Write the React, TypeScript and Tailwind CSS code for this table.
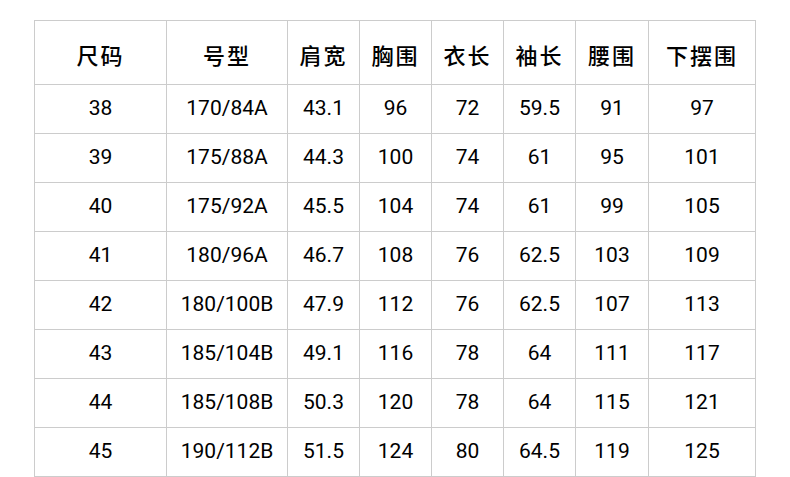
const headers = ["尺码", "号型", "肩宽", "胸围", "衣长", "袖长", "腰围", "下摆围"];

const rows: string[][] = [
  ["38", "170/84A", "43.1", "96", "72", "59.5", "91", "97"],
  ["39", "175/88A", "44.3", "100", "74", "61", "95", "101"],
  ["40", "175/92A", "45.5", "104", "74", "61", "99", "105"],
  ["41", "180/96A", "46.7", "108", "76", "62.5", "103", "109"],
  ["42", "180/100B", "47.9", "112", "76", "62.5", "107", "113"],
  ["43", "185/104B", "49.1", "116", "78", "64", "111", "117"],
  ["44", "185/108B", "50.3", "120", "78", "64", "115", "121"],
  ["45", "190/112B", "51.5", "124", "80", "64.5", "119", "125"],
];

const widths = ["w-[132px]", "w-[121px]", "w-[72px]", "w-[72px]", "w-[72px]", "w-[72px]", "w-[73px]", "w-[107px]"];

export default function App() {
  return (
    <div className="h-[477px] w-[790px] bg-white pl-[34px] pt-[20px]">
      <table className="w-[722px] table-fixed border-collapse text-black">
        <colgroup>
          {widths.map((w, i) => (
            <col key={i} className={w} />
          ))}
        </colgroup>
        <thead>
          <tr className="h-[64px]">
            {headers.map((h) => (
              <th
                key={h}
                className="border border-[#cccccc] pt-[4px] text-center font-['Noto_Sans_CJK_SC',sans-serif] text-[22px] font-medium tracking-[2px]"
              >
                {h}
              </th>
            ))}
          </tr>
        </thead>
        <tbody>
          {rows.map((r) => (
            <tr key={r[0]} className="h-[49px]">
              {r.map((c, i) => (
                <td
                  key={i}
                  className="border border-[#cccccc] text-center font-['Roboto',sans-serif] text-[21px] font-normal"
                >
                  {c}
                </td>
              ))}
            </tr>
          ))}
        </tbody>
      </table>
    </div>
  );
}
